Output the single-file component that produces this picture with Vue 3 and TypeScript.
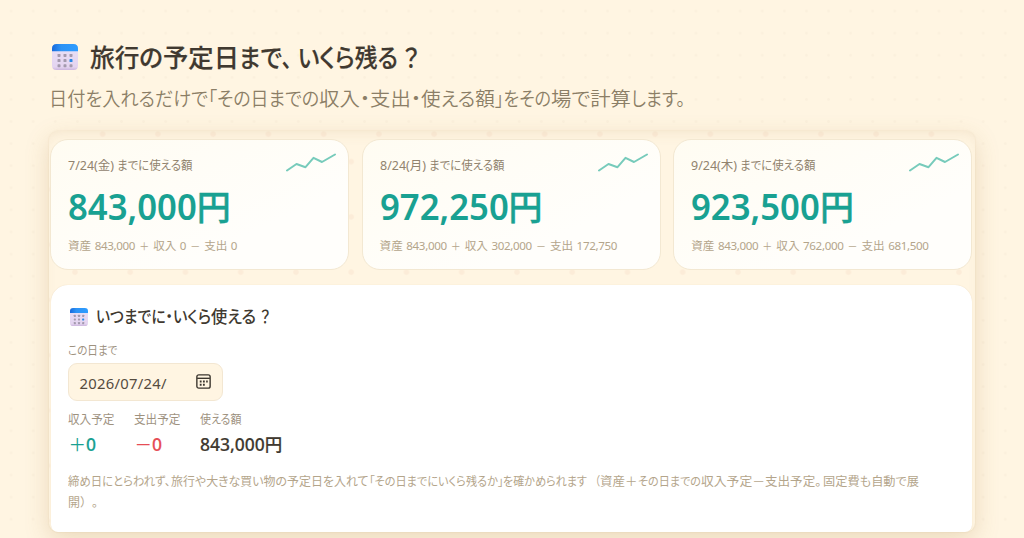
<script setup lang="ts">
import type { Directive } from 'vue'

type Run = [text: string, width: number, gap?: number]
interface Summary {
  day: string
  amount: string
  income: string
  expense: string
}

const summaries: Summary[] = [
  { day: '7/24(金)', amount: '843,000', income: '0', expense: '0' },
  { day: '8/24(月)', amount: '972,250', income: '302,000', expense: '172,750' },
  { day: '9/24(木)', amount: '923,500', income: '762,000', expense: '681,500' },
]
const titleRuns: Run[] = [['旅行の', 73], ['予定日', 76], ['まで', 43], ['、', 10], ['いくら残る', 100, 6], ['？', 16, 5]]
const leadRuns: Run[] = [['日付を入れるだけで「', 168], ['その日までの', 102], ['収入・支出・', 102], ['使える額', 74], ['」をその', 56], ['場で計算', 80], ['します。', 54]]
const headingRuns: Run[] = [['いつまでに・', 77], ['いくら', 38], ['使える', 45], ['？', 10, 4]]
const noteRuns: Run[] = [
  ['締め日にとらわれず、', 102.5], ['旅行や大きな買い物の予定日を入れて', 197.5, 1], ['「その日までにいくら残るか」', 134.5], ['を確かめられます', 84],
  ['（', 5, 8], ['資産＋', 37.5], ['その日までの', 63], ['収入予定－', 64], ['支出予定。', 56.5], ['固定費も自動で展', 96, 2],
]
const dotRows = [11, 16.2, 21.4]
const dotCols = [8.5, 14.5, 20.5]

// Condenses a run of text to the given advance width.
const vFit: Directive<HTMLElement, number> = {
  mounted(el, { value }) {
    const natural = el.getBoundingClientRect().width
    el.style.width = `${value}px`
    el.style.transform = `scaleX(${value / natural})`
  },
}
</script>

<template>
  <main class="page">
    <svg width="0" height="0" class="defs">
      <defs>
        <linearGradient id="calTop" x1="0" x2="1" y1="0" y2="0">
          <stop offset="0" stop-color="#1769dc" /><stop offset=".35" stop-color="#2d93f5" /><stop offset="1" stop-color="#2e9cff" />
        </linearGradient>
        <linearGradient id="calBody" x1="0" x2="0" y1="0" y2="1">
          <stop offset="0" stop-color="#e8def5" /><stop offset=".85" stop-color="#e4d4f0" /><stop offset="1" stop-color="#ccb5de" />
        </linearGradient>
        <symbol id="calendar" viewBox="0 0 26 26">
          <path d="M0 6H26V21.5Q26 26 21.5 26H4.5Q0 26 0 21.5Z" fill="url(#calBody)" />
          <path d="M4.5 0H21.5Q26 0 26 4.5V7.3H0V4.5Q0 0 4.5 0Z" fill="url(#calTop)" />
          <template v-for="y in dotRows" :key="y">
            <rect v-for="x in dotCols" :key="x" :x="x - 3" :y="y - 1.1" width="3" height="3" rx=".7" :fill="x > 20 && y > 15 && y < 20 ? '#2888e6' : '#a49aae'" />
          </template>
        </symbol>
      </defs>
    </svg>
    <h1 class="title"><svg class="title-icon"><use href="#calendar" /></svg><span v-for="[text, width, gap] in titleRuns" :key="text" class="slot" :style="{ paddingLeft: `${gap ?? 0}px` }"><span v-fit="width" class="run">{{ text }}</span></span></h1>
    <p class="lead"><span v-for="[text, width] in leadRuns" :key="text" v-fit="width" class="run">{{ text }}</span></p>

    <section class="panel">
      <div class="cards">
        <article v-for="item in summaries" :key="item.day" class="card">
          <svg class="trend" viewBox="0 0 50 20"><path d="M1 17.5 L10.5 11 L19.5 14.2 L27.5 4.8 L36 9 L49 1.5" /></svg>
          <p class="date"><span v-fit="46" class="run">{{ item.day }}</span><span v-fit="75.5" class="run until-text">までに使える額</span></p>
          <p class="amount"><span v-fit="128.8" class="run">{{ item.amount }}</span><span class="yen">円</span></p>
          <p class="detail">資産<b>843,000</b><i>＋</i>収入<b>{{ item.income }}</b><i>－</i>支出<b>{{ item.expense }}</b></p>
        </article>
      </div>

      <div class="planner">
        <h2 class="heading"><svg class="heading-icon"><use href="#calendar" /></svg><span v-for="[text, width, gap] in headingRuns" :key="text" class="slot" :style="{ paddingLeft: `${gap ?? 0}px` }"><span v-fit="width" class="run">{{ text }}</span></span></h2>
        <p class="label until"><span v-fit="49.5" class="run">この日まで</span></p>
        <div class="field">
          <span>2026/07/24/</span>
          <svg class="picker" viewBox="0 0 16 16"><rect x="1.75" y="1.75" width="12.5" height="12.5" rx="1.8" /><path d="M2 5h12" /><path class="dots" d="M4.5 8h1.7M7.5 8h1.7M10.5 8h1.5M4.5 11h1.7M7.5 11h1.7" /></svg>
        </div>
        <div class="stats">
          <div class="stat income"><p class="label"><span v-fit="46.5" class="run">収入予定</span></p><p class="value"><i>＋</i>0</p></div>
          <div class="stat expense"><p class="label"><span v-fit="46.5" class="run">支出予定</span></p><p class="value"><i>－</i>0</p></div>
          <div class="stat"><p class="label"><span v-fit="41.5" class="run">使える額</span></p><p class="value">843,000円</p></div>
        </div>
        <p class="note"><span v-for="[text, width, gap] in noteRuns" :key="text" class="slot" :style="{ paddingLeft: `${gap ?? 0}px` }"><span v-fit="width" class="run">{{ text }}</span></span><br /><span class="wide">開）。</span></p>
      </div>
    </section>
  </main>
</template>

<style>
body { background: #fff5e2; overflow: hidden; }
</style>

<style scoped>
.page {
  box-sizing: border-box; width: 1024px; height: 538px; overflow: hidden; padding: 36px 49px 0;
  background: radial-gradient(circle, #fbf0dd 0 1px, transparent 1.7px) 0 0 / 22.1px 22.1px, #fff5e2;
  font-family: "Noto Sans", "Noto Sans CJK JP", sans-serif; font-feature-settings: "palt"; color: #403930;
}
.defs { position: absolute; }
.run { display: inline-block; white-space: nowrap; transform-origin: 0 50%; }
.slot { display: inline-block; }
h1, h2, p { margin: 0; font-weight: 400; white-space: nowrap; }
.title { display: flex; align-items: center; height: 38px; font-size: 25.5px; font-weight: 500; -webkit-text-stroke: .2px; }
.title-icon { width: 26px; height: 26px; margin: 4px 12px 0 3.3px; }
.lead { height: 30px; margin-top: 9.5px; line-height: 30px; font-size: 19.5px; font-weight: 350; color: #8b7e66; }
.panel {
  box-sizing: border-box; width: 926px; height: 401px; margin-top: 17.5px; padding: 8px 0 0 1.3px; border-radius: 9px;
  box-shadow: 0 8px 24px rgba(161, 117, 51, .21), 0 0 2px rgba(161, 117, 51, .14), inset 0 8px 15px -8px rgba(166, 119, 60, .14);
  background:
    radial-gradient(circle, #fcecd8 0 2.2px, transparent 3.4px) -1.7px 3px / 55.25px 55.25px,
    radial-gradient(circle, #fcecd8 0 2.2px, transparent 3.4px) 26px -24.5px / 55.25px 55.25px,
    #fff5e2;
}
.cards { display: grid; grid-template-columns: repeat(3, 299px); gap: 12.6px; }
.card {
  position: relative; box-sizing: border-box; height: 131px; padding: 14px 16.7px; border: 1px solid #f3e8d2; border-radius: 18px;
  background: linear-gradient(155deg, #fffcf2, #fffefb 70%);
}
.trend { position: absolute; top: 13px; right: 12px; width: 50px; height: 20px; fill: none; stroke: #77cbbb; stroke-width: 2; stroke-linejoin: round; stroke-linecap: round; }
.date { font-size: 12.3px; line-height: 23px; color: #91836e; }
.until-text { margin-left: 3px; }
.amount { margin-top: 9px; font-size: 36px; line-height: 42px; font-weight: 600; color: #19a192; }
.yen { font-size: 34px; font-weight: 500; -webkit-text-stroke: .4px; }
.detail { margin-top: 7.5px; font-size: 11.6px; line-height: 20px; color: #b4a58b; }
.detail b { margin-left: 3.5px; font-weight: 400; letter-spacing: -.35px; }
.detail i { display: inline-block; width: 18px; text-align: center; font-style: normal; font-size: 10px; }
.planner { box-sizing: border-box; width: 921.5px; height: 247px; margin: 15px 0 0 .5px; padding: 19px 17.2px 0; border-radius: 17px 17px 7px 7px; background: #fff; box-shadow: 0 0 1px #e8d5b4; }
.heading { display: flex; align-items: center; height: 24px; font-size: 16.5px; font-weight: 500; }
.heading-icon { width: 18px; height: 18px; margin: 1px 8px 0 2.5px; }
.label { font-size: 12px; line-height: 18px; color: #9e927f; }
.until { margin-top: 14px; }
.field { box-sizing: border-box; display: flex; align-items: center; justify-content: space-between; width: 155px; height: 38px; margin-top: 3px; padding: 2px 9.6px 0 10.5px; border: 1px solid #f3e7d2; border-radius: 9px; background: #fff5e2; font-size: 14.8px; letter-spacing: .28px; color: #554b3f; }
.picker { width: 17px; height: 17px; margin-top: -2.5px; fill: none; stroke: #3b352e; stroke-width: 1.3; }
.dots { stroke-width: 1.8; }
.stats { display: flex; margin-top: 10px; }
.stat { width: 66px; }
.value { margin-top: 3px; line-height: 24px; font-size: 17.5px; font-weight: 500; white-space: nowrap; -webkit-text-stroke: .15px; }
.value i { display: inline-block; padding-left: .6px; font-style: normal; font-weight: 400; font-feature-settings: normal; -webkit-text-stroke: 0; }
.income .value { color: #19a192; }
.expense .value { color: #e64d55; }
.note { margin-top: 15px; font-size: 12px; line-height: 21px; color: #b4a58b; }
.wide { font-feature-settings: normal; text-spacing-trim: space-all; }
</style>
